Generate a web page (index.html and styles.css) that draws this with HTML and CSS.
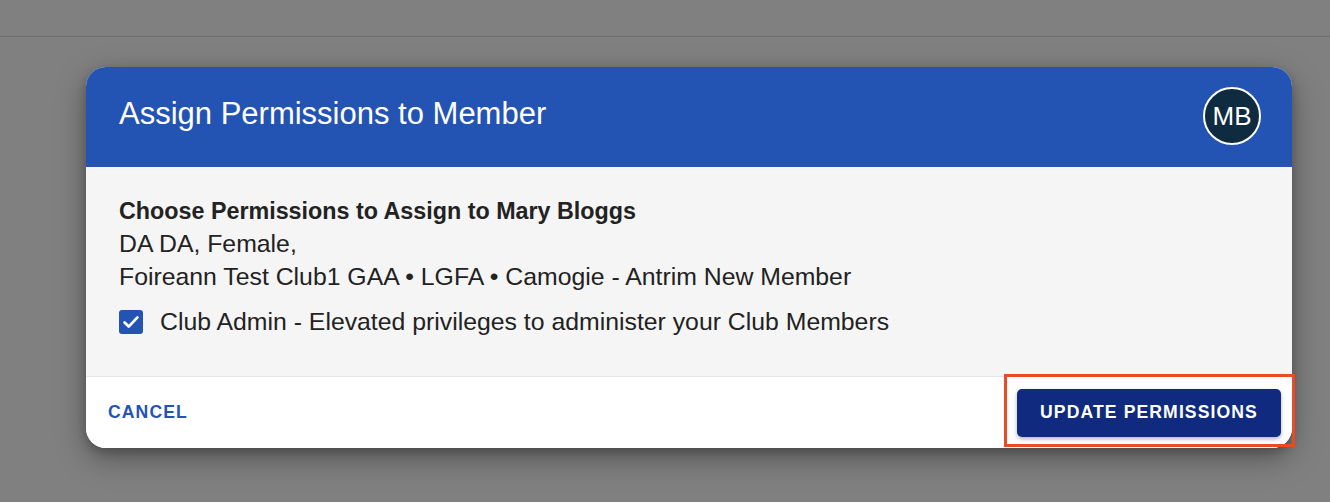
FILE: index.html
```html
<!DOCTYPE html>
<html>
<head>
<meta charset="utf-8">
<link rel="stylesheet" href="styles.css">
</head>
<body>
<div class="page">
  <div class="topbar"></div>
  <div class="stage">
    <div class="dialog">
      <div class="header">
        <h1 class="title">Assign Permissions to Member</h1>
        <div class="avatar">MB</div>
      </div>
      <div class="body">
        <div class="heading">Choose Permissions to Assign to Mary Bloggs</div>
        <div class="line">DA DA, Female,</div>
        <div class="line">Foireann Test Club1 GAA • LGFA • Camogie - Antrim New Member</div>
        <label class="check-row">
          <span class="checkbox">
            <svg viewBox="0 0 24 24" width="22" height="22"><path d="M5 12.5l4.5 4.5 9.5-10" fill="none" stroke="#fff" stroke-width="3" stroke-linecap="round" stroke-linejoin="round"/></svg>
          </span>
          <span class="check-label">Club Admin - Elevated privileges to administer your Club Members</span>
        </label>
      </div>
      <div class="footer">
        <button class="btn-cancel">CANCEL</button>
        <div class="btn-wrap">
          <button class="btn-primary">UPDATE PERMISSIONS</button>
          <div class="highlight"></div>
        </div>
      </div>
    </div>
  </div>
</div>
</body>
</html>
```
FILE: styles.css
```css
html, body {
  margin: 0;
  padding: 0;
}
body {
  width: 1330px;
  height: 502px;
  overflow: hidden;
  background: #808080;
  font-family: "Liberation Sans", Arial, sans-serif;
}
.page {
  height: 502px;
  display: flex;
  flex-direction: column;
}
.topbar {
  height: 37px;
  border-bottom: 1px solid #6d6d6d;
  box-sizing: border-box;
}
.stage {
  padding: 30px 38px 0 86px;
}
.dialog {
  width: 1206px;
  border-radius: 20px;
  box-shadow: 0 10px 30px rgba(0,0,0,0.35), 0 4px 10px rgba(0,0,0,0.2);
  background: #fff;
}
.header {
  height: 100px;
  background: #2353b3;
  border-radius: 20px 20px 0 0;
  display: flex;
  align-items: center;
  justify-content: space-between;
  padding: 0 32px 0 33px;
}
.title {
  margin: 0;
  color: #fff;
  font-weight: 400;
  font-size: 31px;
  position: relative;
  top: -3px;
}
.avatar {
  width: 54px;
  height: 54px;
  border-radius: 50%;
  border: 2px solid #fff;
  background: #0e2b40;
  color: #fff;
  display: flex;
  align-items: center;
  justify-content: center;
  font-size: 26px;
  position: relative;
  top: -1px;
  left: 1px;
}
.body {
  background: #f5f5f5;
  height: 210px;
  box-sizing: border-box;
  padding: 28px 33px 0 33px;
  border-bottom: 1px solid #e6e6e6;
  color: #222;
  font-size: 24.8px;
}
.heading {
  font-weight: 700;
  font-size: 23.3px;
  line-height: 32px;
}
.line {
  line-height: 33px;
}
.check-row {
  display: flex;
  align-items: center;
  margin-top: 15px;
  gap: 17px;
  height: 28px;
}
.checkbox {
  width: 24px;
  height: 24px;
  border-radius: 3px;
  background: #2353b3;
  display: flex;
  align-items: center;
  justify-content: center;
}
.check-label {
  line-height: 28px;
}
.footer {
  height: 71px;
  border-radius: 0 0 20px 20px;
  background: #fff;
  display: flex;
  align-items: center;
  justify-content: space-between;
  padding: 0 11px 0 22px;
}
.btn-cancel {
  background: none;
  border: none;
  color: #2353b3;
  font-family: "Liberation Sans", Arial, sans-serif;
  font-weight: 700;
  font-size: 17.6px;
  letter-spacing: 1.1px;
  padding: 0;
}
.btn-wrap {
  position: relative;
}
.btn-primary {
  width: 264px;
  height: 48px;
  background: #0f2a7f;
  color: #fff;
  border: none;
  border-radius: 5px;
  font-family: "Liberation Sans", Arial, sans-serif;
  font-weight: 700;
  font-size: 17.6px;
  letter-spacing: 1.1px;
  box-shadow: 0 2px 4px rgba(0,0,0,0.3);
  display: block;
}
.highlight {
  position: absolute;
  left: -13px;
  top: -15px;
  width: 291px;
  height: 73px;
  box-sizing: border-box;
  border: 3px solid #ea4a26;
  pointer-events: none;
}
```
